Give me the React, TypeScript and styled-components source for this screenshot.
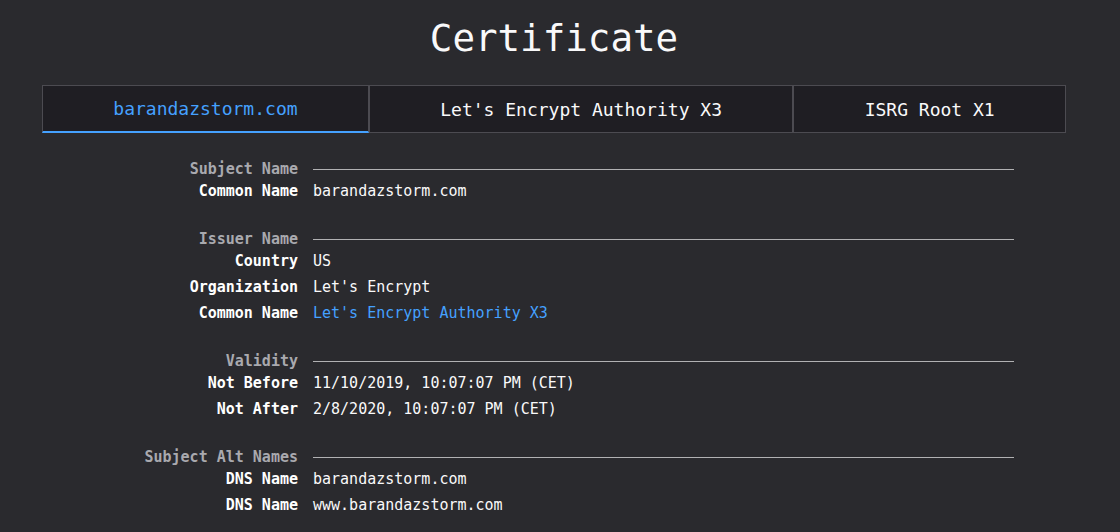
import React from "react";
import styled, { createGlobalStyle } from "styled-components";

const Global = createGlobalStyle`
  html, body { margin: 0; padding: 0; background: #2a2a2e; }
  body { font-family: "DejaVu Sans Mono", "Liberation Mono", monospace; color: #f9f9fa; }
`;

const Page = styled.div`
  width: 1024px;
  margin-left: 42px;
  display: flex;
  flex-direction: column;
`;

const Title = styled.h1`
  margin: 16px 0 0;
  font-size: 37.5px;
  font-weight: normal;
  line-height: 44px;
  text-align: center;
  color: #f9f9fa;
`;

const TabBar = styled.div`
  display: flex;
  margin-top: 25px;
`;

const Tab = styled.div<{ $active?: boolean }>`
  flex: 1 1 auto;
  display: flex;
  align-items: center;
  justify-content: center;
  background: #1f1e23;
  border: 1px solid #4c4b51;
  border-bottom: ${(p) => (p.$active ? "2px solid #45a1ff" : "1px solid #4c4b51")};
  box-sizing: content-box;
  height: ${(p) => (p.$active ? "45px" : "46px")};
  font-size: 18px;
  color: ${(p) => (p.$active ? "#45a1ff" : "#f9f9fa")};
`;

const Info = styled.div`
  display: flex;
  flex-direction: column;
  gap: 26px;
  margin-top: 25px;
`;

const Group = styled.div`
  display: grid;
  grid-template-columns: 256px 701px;
  column-gap: 15px;
  row-gap: 4px;
  font-size: 15px;
  line-height: 22px;
`;

const GroupTitle = styled.div`
  text-align: right;
  font-weight: bold;
  color: #a9a9ae;
  margin-bottom: -4px;
`;

const Rule = styled.div`
  align-self: center;
  height: 1px;
  background: #b1b1b3;
  margin-bottom: -4px;
`;

const Label = styled.div`
  text-align: right;
  font-weight: bold;
  color: #ffffff;
`;

const Value = styled.div<{ $link?: boolean }>`
  color: ${(p) => (p.$link ? "#45a1ff" : "#f9f9fa")};
  white-space: pre;
`;

type Row = { label: string; value: string; link?: boolean };
const groups: { title: string; rows: Row[] }[] = [
  { title: "Subject Name", rows: [{ label: "Common Name", value: "barandazstorm.com" }] },
  {
    title: "Issuer Name",
    rows: [
      { label: "Country", value: "US" },
      { label: "Organization", value: "Let's Encrypt" },
      { label: "Common Name", value: "Let's Encrypt Authority X3", link: true },
    ],
  },
  {
    title: "Validity",
    rows: [
      { label: "Not Before", value: "11/10/2019, 10:07:07 PM (CET)" },
      { label: "Not After", value: "2/8/2020, 10:07:07 PM (CET)" },
    ],
  },
  {
    title: "Subject Alt Names",
    rows: [
      { label: "DNS Name", value: "barandazstorm.com" },
      { label: "DNS Name", value: "www.barandazstorm.com" },
    ],
  },
];

export default function App() {
  return (
    <>
      <Global />
      <Page>
        <Title>Certificate</Title>
        <TabBar>
          <Tab $active>barandazstorm.com</Tab>
          <Tab>Let's Encrypt Authority X3</Tab>
          <Tab>ISRG Root X1</Tab>
        </TabBar>
        <Info>
          {groups.map((g) => (
            <Group key={g.title}>
              <GroupTitle>{g.title}</GroupTitle>
              <Rule />
              {g.rows.map((r, i) => (
                <React.Fragment key={i}>
                  <Label>{r.label}</Label>
                  <Value $link={r.link}>{r.value}</Value>
                </React.Fragment>
              ))}
            </Group>
          ))}
        </Info>
      </Page>
    </>
  );
}
